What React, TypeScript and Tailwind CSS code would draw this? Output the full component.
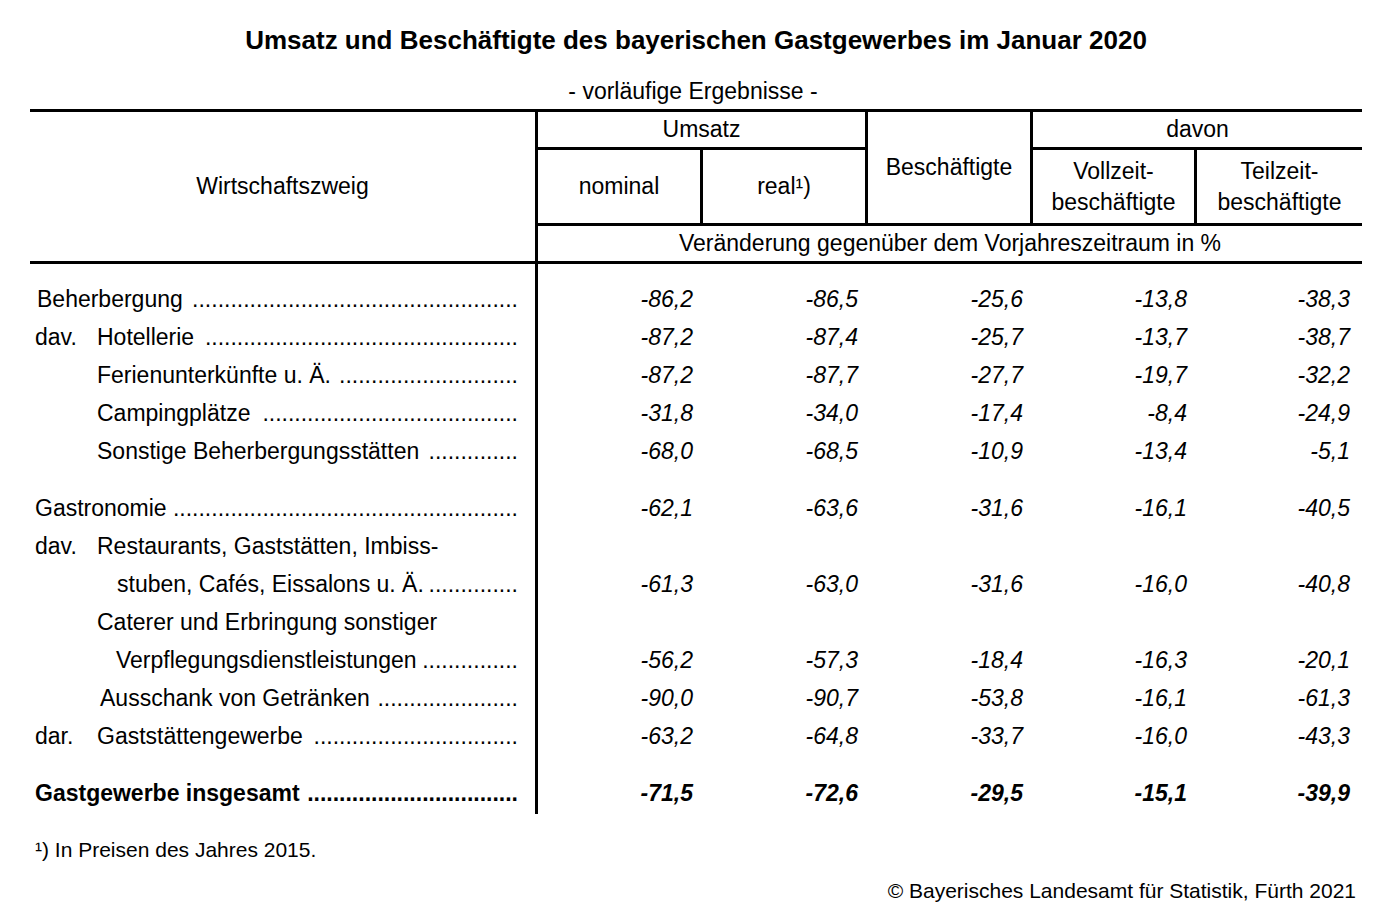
import React from "react";

type Row = {
    prefix?: string
    label: string
    indent?: number
    values?: string[]
    bold?: boolean
    dots?: number
    gapBefore?: boolean
}

const rows: Row[] = [
    { label: 'Beherbergung', indent: 2, dots: 51, values: ['-86,2', '-86,5', '-25,6', '-13,8', '-38,3'] },
    { prefix: 'dav.', label: 'Hotellerie', dots: 49, values: ['-87,2', '-87,4', '-25,7', '-13,7', '-38,7'] },
    { prefix: '', label: 'Ferienunterkünfte u. Ä.', dots: 28, values: ['-87,2', '-87,7', '-27,7', '-19,7', '-32,2'] },
    { prefix: '', label: 'Campingplätze', dots: 40, values: ['-31,8', '-34,0', '-17,4', '-8,4', '-24,9'] },
    { prefix: '', label: 'Sonstige Beherbergungsstätten', dots: 14, values: ['-68,0', '-68,5', '-10,9', '-13,4', '-5,1'] },
    { label: 'Gastronomie', dots: 54, values: ['-62,1', '-63,6', '-31,6', '-16,1', '-40,5'], gapBefore: true },
    { prefix: 'dav.', label: 'Restaurants, Gaststätten, Imbiss-' },
    { prefix: '', label: 'stuben, Cafés, Eissalons u. Ä.', indent: 20, dots: 14, values: ['-61,3', '-63,0', '-31,6', '-16,0', '-40,8'] },
    { prefix: '', label: 'Caterer und Erbringung sonstiger' },
    { prefix: '', label: 'Verpflegungsdienstleistungen', indent: 19, dots: 15, values: ['-56,2', '-57,3', '-18,4', '-16,3', '-20,1'] },
    { prefix: '', label: 'Ausschank von Getränken', indent: 3, dots: 22, values: ['-90,0', '-90,7', '-53,8', '-16,1', '-61,3'] },
    { prefix: 'dar.', label: 'Gaststättengewerbe', dots: 32, values: ['-63,2', '-64,8', '-33,7', '-16,0', '-43,3'] },
    { label: 'Gastgewerbe insgesamt', dots: 33, values: ['-71,5', '-72,6', '-29,5', '-15,1', '-39,9'], bold: true, gapBefore: true },
]

const colWidths = ['w-[162px]', 'w-[165px]', 'w-[165px]', 'w-[164px]', 'w-[165px]']

const App = () => {
    return (
        <div className="bg-white w-[1391px] h-[923px] text-black font-['Liberation_Sans',Arial,sans-serif]">
            <div className="w-[1332px] ml-[30px] pt-[25px]">
                <div className="text-center font-bold text-[26px] leading-[30px]">
                    Umsatz und Beschäftigte des bayerischen Gastgewerbes im Januar 2020
                </div>
                <div className="text-center text-[23px] leading-[30px] mt-[21px] mb-[3px] pr-[6px]">
                    - vorläufige Ergebnisse -
                </div>

                {/* header */}
                <div className="flex border-y-[3px] border-black text-[23px] leading-[31px]">
                    <div className="w-[505px] flex items-center justify-center">Wirtschaftszweig</div>
                    <div className="flex-1 border-l-[3px] border-black flex flex-col">
                        <div className="flex h-[111px]">
                            <div className="w-[327px] flex flex-col">
                                <div className="h-[38px] border-b-[3px] border-black flex items-center justify-center">Umsatz</div>
                                <div className="flex flex-1">
                                    <div className="w-[162px] flex items-center justify-center">nominal</div>
                                    <div className="flex-1 border-l-[3px] border-black flex items-center justify-center">real¹)</div>
                                </div>
                            </div>
                            <div className="w-[165px] border-l-[3px] border-black flex items-center justify-center">Beschäftigte</div>
                            <div className="flex-1 border-l-[3px] border-black flex flex-col">
                                <div className="h-[38px] border-b-[3px] border-black flex items-center justify-center">davon</div>
                                <div className="flex flex-1">
                                    <div className="w-[161px] flex flex-col items-center justify-center">
                                        <span>Vollzeit-</span>
                                        <span>beschäftigte</span>
                                    </div>
                                    <div className="flex-1 border-l-[3px] border-black flex flex-col items-center justify-center">
                                        <span>Teilzeit-</span>
                                        <span>beschäftigte</span>
                                    </div>
                                </div>
                            </div>
                        </div>
                        <div className="h-[38px] border-t-[3px] border-black flex items-center justify-center">
                            Veränderung gegenüber dem Vorjahreszeitraum in %
                        </div>
                    </div>
                </div>

                {/* body */}
                <div className="flex text-[23px]">
                    <div className="w-[505px] pt-[16px] pb-[2px]">
                        {rows.map((row, i) => (
                            <div key={i} className={(row.gapBefore ? 'mt-[19px] ' : '') + (row.bold ? 'font-bold ' : '') + 'h-[38px] flex items-center pl-[5px] pr-[17px]'}>
                                {row.prefix !== undefined && (
                                    <span className="w-[62px] shrink-0">{row.prefix}</span>
                                )}
                                <span className="whitespace-nowrap" style={{ paddingLeft: row.indent || 0 }}>{row.label}</span>
                                {row.dots && (
                                    <span className="ml-auto whitespace-nowrap">{'.'.repeat(row.dots)}</span>
                                )}
                            </div>
                        ))}
                    </div>
                    <div className="flex-1 border-l-[3px] border-black pt-[16px] pb-[2px]">
                        {rows.map((row, i) => (
                            <div key={i} className={(row.gapBefore ? 'mt-[19px] ' : '') + (row.bold ? 'font-bold ' : '') + 'h-[38px] flex items-center italic'}>
                                {row.values && row.values.map((v, j) => (
                                    <div key={j} className={colWidths[j] + ' text-right ' + (j === 4 ? 'pr-[9px]' : 'pr-[7px]')}>{v}</div>
                                ))}
                            </div>
                        ))}
                    </div>
                </div>

                <div className="text-[21px] leading-[26px] mt-[23px] pl-[5px]">¹) In Preisen des Jahres 2015.</div>
                <div className="text-[21px] leading-[26px] mt-[15px] text-right pr-[6px]">© Bayerisches Landesamt für Statistik, Fürth 2021</div>
            </div>
        </div>
    )
}

export default App
